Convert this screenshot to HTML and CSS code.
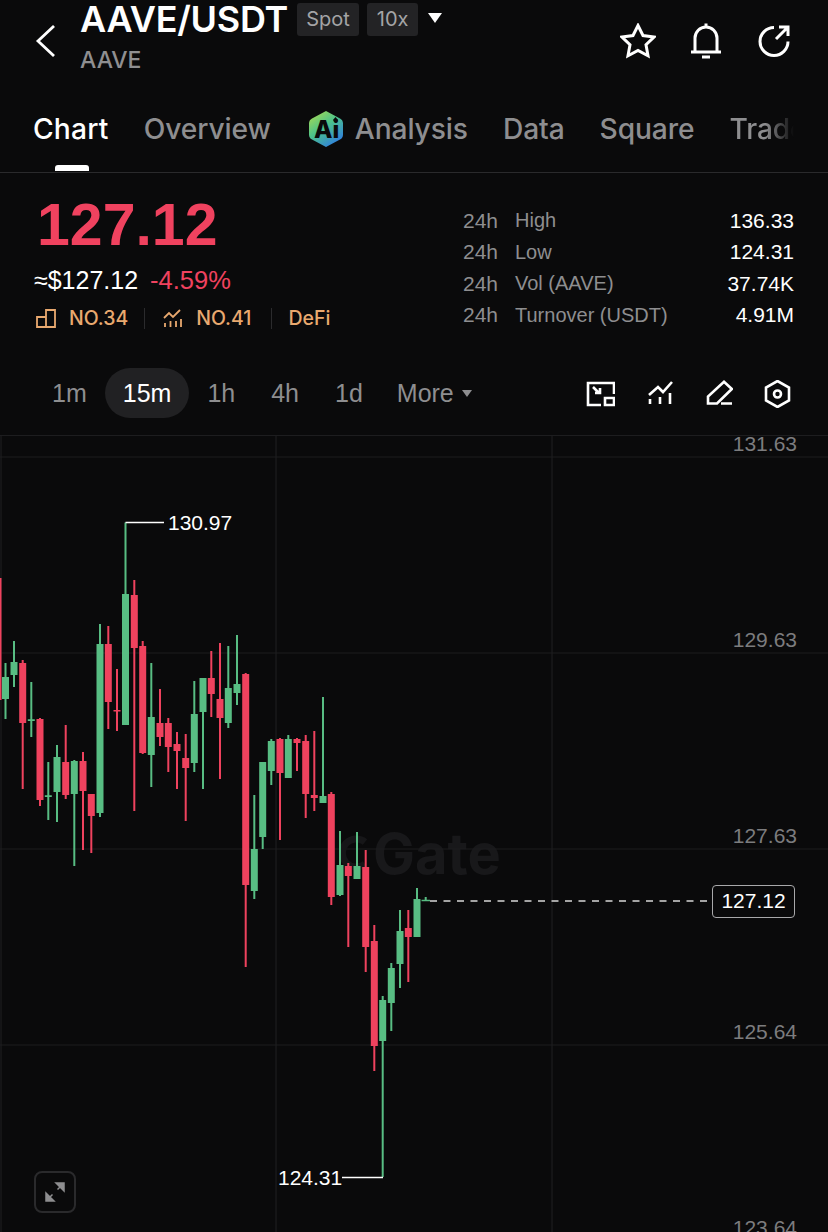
FILE: index.html
```html
<!DOCTYPE html>
<html lang="en">
<head>
<meta charset="utf-8">
<title>AAVE/USDT</title>
<link rel="stylesheet" href="styles.css">
</head>
<body>
<main class="page">
  <header class="top">
    <svg class="back" viewBox="0 0 20 32"><path d="M19.500 1 3.500 16l16 15"/></svg>
    <div class="pair">
      <div class="pair-row">
        <h1>AAVE/USDT</h1>
        <span class="chip">Spot</span>
        <span class="chip">10x</span>
        <span class="caret"></span>
      </div>
      <div class="coin">AAVE</div>
    </div>
    <div class="top-icons">
      <svg class="ti" viewBox="0 0 36 36"><path d="M18 2.500 23 12.500l11 1.500-8 7.800 2 11L18 27.500 8 32.800l2-11-8-7.800 11-1.500z"/></svg>
      <svg class="ti" viewBox="0 0 36 36"><path d="M3 29h30M7 29V15a11 11 0 0 1 22 0v14M18 .5v3.500M14 34h8"/></svg>
      <svg class="ti" viewBox="0 0 36 36"><path d="M18 4.500A14 14 0 1 0 32 18.500M20 16 32 4M23 4h9v9"/></svg>
    </div>
  </header>

  <nav class="tabs">
    <a class="tab on">Chart</a>
    <a class="tab">Overview</a>
    <a class="tab ai">
      <svg class="ai-logo" viewBox="0 0 36 38">
        <defs><linearGradient id="aig" x1="0" y1="0" x2="0.7" y2="1"><stop offset="0" stop-color="#b4de4a"/><stop offset=".5" stop-color="#4cc28a"/><stop offset="1" stop-color="#2f7fe0"/></linearGradient></defs>
        <path fill="url(#aig)" d="M18 1 32 8.500q3 1.500 3 5v11q0 3.500-3 5L18 37 4 29.500q-3-1.500-3-5v-11q0-3.500 3-5z"/>
        <text x="6" y="28" class="ai-text">Ai</text>
        <path class="ai-star" d="m27.500 7 2.500 3-2.500 3-2.500-3z"/>
      </svg>
      Analysis
    </a>
    <a class="tab">Data</a>
    <a class="tab">Square</a>
    <a class="tab fade">Trade</a>
  </nav>

  <section class="stats">
    <div class="quote">
      <div class="price">127.12</div>
      <div class="sub"><span class="usd">≈$127.12</span><span class="pct">-4.59%</span></div>
      <div class="ranks">
        <svg class="ri" viewBox="0 0 20 20"><path d="M1 9h9v10H1zM10 19V2h9v17z"/></svg>
        <span class="rank">NO.34</span>
        <i class="sep"></i>
        <svg class="ri" viewBox="0 0 20 20"><path d="m1 10 5-5 4 4 7-7M2 19v-4M7.500 19v-6M13 19v-6M18 19v-8"/></svg>
        <span class="rank">NO.41</span>
        <i class="sep wide"></i>
        <span class="rank">DeFi</span>
      </div>
    </div>
    <dl class="table">
      <div class="row"><dt>24h</dt><dd class="lab">High</dd><dd class="val">136.33</dd></div>
      <div class="row"><dt>24h</dt><dd class="lab">Low</dd><dd class="val">124.31</dd></div>
      <div class="row"><dt>24h</dt><dd class="lab">Vol (AAVE)</dd><dd class="val">37.74K</dd></div>
      <div class="row"><dt>24h</dt><dd class="lab">Turnover (USDT)</dd><dd class="val">4.91M</dd></div>
    </dl>
  </section>

  <section class="bar">
    <span class="tf">1m</span>
    <span class="tf on">15m</span>
    <span class="tf">1h</span>
    <span class="tf">4h</span>
    <span class="tf">1d</span>
    <span class="tf more">More<b class="mini-caret"></b></span>
    <div class="tools">
      <svg class="tool" viewBox="0 0 30 28"><path d="M16 25H3V3h26v11M8 7l6 6M15 8v5h-5M20 18h9v7h-9z"/></svg>
      <svg class="tool" viewBox="0 0 30 28"><path d="m5 15 9-8 5 5 9-10M6 19v5M16 17v7M26 13v11"/></svg>
      <svg class="tool" viewBox="0 0 30 28"><path d="M5 23.500v-7L21 1.800 28.800 9 14 23.500zM18 23.500h11"/></svg>
      <svg class="tool" viewBox="0 0 30 28"><path d="m15.500 1 11.500 6.500v13L15.500 27 4 20.500v-13z"/><circle cx="15.500" cy="14" r="3.500"/></svg>
    </div>
  </section>

  <section class="chart">
    <div class="mark">Gate</div>
    <svg class="plot" viewBox="0 0 828 797" aria-hidden="true">
      <g transform="translate(0 -435)">
        <path class="grid" d="M0 457H828M0 653H828M0 849H828M0 1045H828M1 435V1232M276 435V1232M552 435V1232M0 435.500H828"/>
        <path class="mark-logo" d="M365 842a14 14 0 1 0 0 22"/>
        <path class="wick up" d="M5.500 663V719M14 641V687M31.300 682V737M48.300 762V820M57 745V822M74.300 760V866M100 624V817M125.500 522.500V725M151.300 663V787M194.300 681V772M203 678V789M228.300 646V728M237 635V705M254.300 795V899M262.700 762V849M271.300 739V785M288.300 735V778M323 697V803M340 831V896M357 832V879M382.700 996V1177M391.300 963V1031M400 910V988M417 888V937M425.700 897V901"/>
        <path class="wick down" d="M0.500 578V700M22.700 660V789M40 718V806M65.700 725V799M83 752V850M91.300 794V853M108.300 626V729M117 669V731M134.300 580V811M142.700 641V754M160 689V746M168.300 718V772M177 732V789M185.700 734V821M211.300 651V717M220 643V779M245.700 673V967M280 738V840M297 738V771M305.700 735V818M314.300 731V811M331.300 792V905M348.300 863V947M365.700 850V972M374.300 925V1071M408.300 910V982"/>
        <path class="body up" d="M5.500 677V699M14 662V675M31.300 719.300V720.900M48.300 795.300V796.900M57 757V792M74.300 761V794M100 644V813M125.500 594V725M151.300 717V755M194.300 714V763M203 678V712M228.300 688V723M237 684V693M254.300 849V891M262.700 762V837M271.300 741V771M288.300 739V778M323 796V803M340 865V895M357 866V879M382.700 1000V1041M391.300 968V1003M400 931V964M417 899V937"/>
        <path class="body down" d="M22.700 663V723M40 719V800M65.700 762V795M83 761V791M91.300 794V816M108.300 644V702M117 710V711.500M134.300 595V648M142.700 646V753M160 723V737M168.300 723V747M177 744V751M185.700 758V768M211.300 678V694M220 699V718M245.700 674V885M280 739V773M297 739V743M305.700 741V794M314.300 795V798M331.300 794V897M348.300 866V876M365.700 867V947M374.300 941V1046M408.300 928V937"/>
        <path class="body up thin" d="M421.500 900.500H430"/>
        <path class="leader" d="M125.500 522.500H164M342 1177.500H383"/>
        <path class="dash" d="M430 901H712"/>
      </g>
    </svg>
    <span class="axis a1">131.63</span>
    <span class="axis a2">129.63</span>
    <span class="axis a3">127.63</span>
    <span class="axis a4">125.64</span>
    <span class="axis a5">123.64</span>
    <span class="peak p-hi">130.97</span>
    <span class="peak p-lo">124.31</span>
    <span class="now">127.12</span>
    <button class="expand" aria-label="Expand">
      <svg viewBox="0 0 24 24"><path d="M4 20 9.500 14.500M14.500 9.500 20 4M13 3h8v8zM3 13v8h8z"/></svg>
    </button>
  </section>
</main>
</body>
</html>
```
FILE: styles.css
```css
* { box-sizing: border-box; margin: 0; padding: 0; }
html, body { background: #0a0a0b; }
body { font-family: Inter, "Liberation Sans", sans-serif; color: #fff; }
.page { width: 828px; height: 1232px; display: flex; flex-direction: column; overflow: hidden; }

.top { height: 85px; display: flex; align-items: flex-start; padding: 0 36px 0 34px; flex: none; }
.back { width: 21px; height: 32px; margin-top: 24.500px; margin-right: 25px; fill: none; stroke: #fff; stroke-width: 2.800; }
.pair { flex: 1; }
.pair-row { display: flex; align-items: center; height: 38px; }
h1 { font-size: 36px; font-weight: 600; letter-spacing: -0.25px; line-height: 40px; }
.chip { margin-left: 9px; background: #232325; color: #a4a4a6; font-size: 20px; height: 33px; line-height: 33px; padding: 0 9px; border-radius: 3px; }
.chip + .chip { margin-left: 8px; padding: 0 10px; }
.caret { margin-left: 10px; width: 0; height: 0; margin-top: -2px; border-left: 7px solid transparent; border-right: 7px solid transparent; border-top: 10px solid #fff; }
.coin { color: #8f8f91; font-size: 23px; font-weight: 500; line-height: 28px; margin-top: 8px; }
.top-icons { display: flex; gap: 32px; margin-top: 23px; }
.ti { width: 36px; height: 36px; fill: none; stroke: #fff; stroke-width: 3; }

.tabs { height: 88px; flex: none; display: flex; align-items: flex-start; border-bottom: 1px solid #2a2a2c; padding-left: 33px; gap: 35px; overflow: hidden; width: 828px; }
.tab { font-size: 28.200px; line-height: 34px; margin-top: 27px; color: #8e8e90; font-weight: 500; white-space: nowrap; position: relative; letter-spacing: -0.1px; }
.tab.on { color: #fff; letter-spacing: 0.2px; }
.tab.on::after { content: ""; position: absolute; left: 22px; top: 53px; width: 34px; height: 6px; background: #fff; border-radius: 3px 3px 0 0; }
.tab.ai { display: flex; align-items: center; gap: 11px; margin-left: 2px; height: 34px; }
.ai-logo { width: 36px; height: 38px; flex: none; }
.ai-text { font-size: 24px; font-weight: 800; fill: #0a0a0b; }
.ai-star { fill: #0a0a0b; }
.tab.fade { width: 64px; overflow: hidden; -webkit-mask-image: linear-gradient(90deg, #000 55%, transparent 100%); mask-image: linear-gradient(90deg, #000 55%, transparent 100%); }

.stats { flex: none; height: 176px; display: flex; justify-content: space-between; padding: 0 34px; }
.price { font-family: "Liberation Sans", sans-serif; font-size: 59px; font-weight: 700; color: #f0425f; line-height: 68px; margin-top: 18px; margin-left: 3px; }
.sub { display: flex; gap: 12px; font-family: "Liberation Sans", sans-serif; font-size: 25px; line-height: 30px; margin-top: 6px; }
.usd { color: #fff; }
.pct { color: #f0425f; font-size: 25.500px; }
.ranks { display: flex; align-items: center; margin-top: 10px; color: #e9a96f; font-size: 19.500px; font-weight: 500; height: 26px; }
.ri { width: 20px; height: 20px; fill: none; stroke: #e9a96f; stroke-width: 1.800; margin-right: 13px; margin-left: 2px; }
.sep { width: 1px; height: 21px; background: #2b2b2d; margin: 0 16px; }
.sep.wide { margin-left: 20px; }

.table { width: 331px; margin-top: 32px; display: flex; flex-direction: column; font-family: "Liberation Sans", sans-serif; }
.row { display: flex; height: 31.500px; align-items: center; font-size: 21px; }
.row dt { color: #8e8e90; width: 52px; }
.lab { color: #8e8e90; flex: 1; font-size: 20px; }
.val { color: #fff; }

.bar { flex: none; height: 86px; display: flex; align-items: flex-start; padding: 19px 36.500px 0 34px; }
.tf { color: #8e8e90; font-family: "Liberation Sans", sans-serif; font-size: 25px; height: 50px; line-height: 50px; padding: 0 18px; border-radius: 25px; }
.tf.on { background: #212123; color: #fff; }
.tf.more { display: flex; align-items: center; gap: 8px; margin-left: -2px; }
.mini-caret { width: 0; height: 0; border-left: 5.500px solid transparent; border-right: 5.500px solid transparent; border-top: 7px solid #8e8e90; }
.tools { margin-left: auto; display: flex; gap: 29px; margin-top: 12px; }
.tool { width: 30px; height: 28px; fill: none; stroke: #fff; stroke-width: 2.600; }

.chart { position: relative; flex: 1; overflow: hidden; font-family: "Liberation Sans", sans-serif; }
.plot { position: absolute; left: 0; top: 0; width: 828px; height: 797px; }
.grid { stroke: #1d1d1f; stroke-width: 1.200; fill: none; }
.mark-logo { fill: none; stroke: #161618; stroke-width: 7; }
.wick { fill: none; stroke-width: 2; }
.body { fill: none; stroke-width: 7; }
.body.thin { stroke-width: 1.500; }
.up { stroke: #58bd83; }
.down { stroke: #ef425e; }
.leader { stroke: #fff; stroke-width: 1.500; fill: none; }
.dash { stroke: #d8d8d8; stroke-width: 1.500; stroke-dasharray: 7 6.500; fill: none; }
.mark { position: absolute; left: 373px; top: 389px; font-family: Inter, sans-serif; font-size: 56px; font-weight: 700; color: #18181a; line-height: 60px; }
.axis { position: absolute; right: 31px; color: #7c7c7e; font-size: 21px; line-height: 24px; }
.a1 { top: -3px; }
.a2 { top: 193px; }
.a3 { top: 389px; }
.a4 { top: 585px; }
.a5 { top: 781px; }
.peak { position: absolute; font-size: 21px; line-height: 24px; color: #fff; }
.p-hi { left: 168px; top: 76px; }
.p-lo { left: 278px; top: 731px; }
.now { position: absolute; left: 712px; top: 450px; width: 83px; height: 32.500px; line-height: 30px; border: 1px solid #a9a9ab; border-radius: 4px; text-align: center; font-size: 21px; background: #0a0a0b; }
.expand { position: absolute; left: 34px; top: 736px; width: 42px; height: 42px; background: transparent; border: 2px solid #2a2a2c; border-radius: 8px; display: flex; align-items: center; justify-content: center; }
.expand svg { width: 24px; height: 24px; fill: #8e8e90; stroke: #8e8e90; stroke-width: 1.500; }
```
